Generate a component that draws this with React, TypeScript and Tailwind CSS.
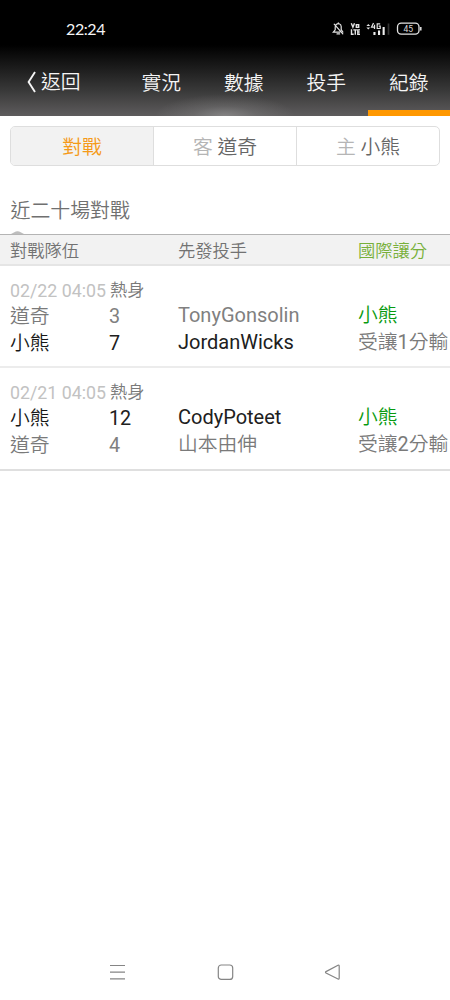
import React from "react";

type Side = { name: string; score: string; pitcher: string; won: boolean };
type Game = { date: string; kind: string; sides: Side[]; pick: string; runs: number };

const games: Game[] = [
  {
    date: "02/22 04:05",
    kind: "熱身",
    sides: [
      { name: "道奇", score: "3", pitcher: "TonyGonsolin", won: false },
      { name: "小熊", score: "7", pitcher: "JordanWicks", won: true },
    ],
    pick: "小熊",
    runs: 1,
  },
  {
    date: "02/21 04:05",
    kind: "熱身",
    sides: [
      { name: "小熊", score: "12", pitcher: "CodyPoteet", won: true },
      { name: "道奇", score: "4", pitcher: "山本由伸", won: false },
    ],
    pick: "小熊",
    runs: 2,
  },
];

const tabs = ["實況", "數據", "投手", "紀錄"];

function StatusIcons() {
  return (
    <svg width="92" height="20" viewBox="332 19 92 20" fill="none" stroke="#e4e4e4">
      <path d="M335.200 26.500v3.300l-1.900 2.300h6.500M335.900 24.900a2.900 2.900 0 0 1 5.300 1.600v3.200l1.700 2.300M337 33.900h2.600M334.200 24.200l8.600 9.700M338.300 22.800v1" strokeWidth="1.2" strokeLinecap="round" />
      <path d="M351.300 23.200l1.600 4 1.600-4M356.300 24.800h2.400v2.500h-2.400zM351.500 29.200v5h2.200M353.300 29.900h3.600M355.300 29.900v4.800M360 29.900h-2.200v4.400h2.200M357.800 32h1.900" strokeWidth="1.4" />
      <path d="M366.400 26l1.900-2 1.900 2zM366.400 27.600l1.900 2 1.900-2z" fill="#e4e4e4" stroke="none" />
      <path d="M373.500 23l-2 4.200h3.700M374.500 24.800v4.200M380.200 23.800h-3v4.700h3v-2.300h-1.500" strokeWidth="1.200" />
      <path d="M373.400 32h2.100v3h-2.100zM378 30.500h2.100V35H378zM382.600 27h2.100v8h-2.100z" fill="#eee" stroke="none" />
      <path d="M388.500 23.500v11.3" stroke="#333" strokeWidth="1.7" />
      <rect x="397.500" y="23.200" width="21.500" height="11" rx="3.700" strokeWidth="1.300" />
      <path d="M420.800 27v3.600" strokeWidth="1.500" />
      <text x="408.300" y="31.800" textAnchor="middle" fill="#d8d8d8" stroke="none" fontSize="8.500" fontWeight="400" fontFamily="Roboto, sans-serif">45</text>
    </svg>
  );
}

function Header() {
  return (
    <header className="h-[116px] bg-[radial-gradient(ellipse_70px_22px_at_50%_100%,#aaaaaa80_0%,#aaaaaa30_45%,transparent_100%),linear-gradient(to_bottom,#000_0,#000_45px,#1c1c1c_68px,#383838_90px,#5e5c5d_116px)] text-[#f5f5f5]">
      <div className="flex h-[48px] items-start justify-between pl-[66px] pr-[26px] pt-[19px]">
        <time className="font-[Lato,sans-serif] text-[16px] font-normal leading-5 tracking-[-0.4px]">22:24</time>
        <StatusIcons />
      </div>
      <nav className="flex h-[68px] text-[19.800px] leading-[68px]">
        <button className="flex w-[120px] items-center pl-[26px]">
          <svg width="11" height="22" viewBox="0 0 11 22" fill="none" stroke="#f5f5f5" strokeWidth="1.9">
            <path d="M9 1L2.6 11 9 21" />
          </svg>
          <span className="ml-[4px] pt-[2px]">返回</span>
        </button>
        {tabs.map((tab) => (
          <button
            key={tab}
            className={
              tab === "紀錄"
                ? "w-[82.500px] bg-[linear-gradient(to_top,#ff9800_6px,transparent_6px)] pt-[2px]"
                : "w-[82.500px] pt-[2px]"
            }
          >
            {tab}
          </button>
        ))}
      </nav>
    </header>
  );
}

function Segments() {
  return (
    <div className="mx-[10px] mt-[10px] flex h-10 divide-x divide-[#dedede] overflow-hidden rounded-[5px] border border-[#dedede] text-[19.800px] leading-[41px] text-[#666]">
      <button className="w-[143px] bg-[#f2f2f2] text-[#f59a18]">對戰</button>
      <button className="w-[143px]"><span className="text-[#b5b5b5]">客</span> 道奇</button>
      <button className="flex-1"><span className="text-[#b5b5b5]">主</span> 小熊</button>
    </div>
  );
}

function GameRow({ game, last }: { game: Game; last: boolean }) {
  return (
    <section
      className={
        last
          ? "h-[103px] border-b-2 border-[#dfdfdf] pl-[10px] pt-[12px]"
          : "h-[102px] border-b-2 border-[#ececec] pl-[10px] pt-[12px]"
      }
    >
      <div className="flex h-[25px] items-center text-[17.200px] leading-[25px] text-[#7a7a7a]">
        <span className="w-[100px] text-[17.800px] font-normal text-[#c2c2c2]">{game.date}</span>
        <span>{game.kind}</span>
      </div>
      <div className="grid grid-cols-[99px_69px_180px_1fr] whitespace-nowrap text-[19.800px] leading-[27px]">
        <div>
          {game.sides.map((s) => (
            <div key={s.name} className={s.won ? "text-[#181818]" : "text-[#7a7a7a]"}>{s.name}</div>
          ))}
        </div>
        <div className="font-normal">
          {game.sides.map((s) => (
            <div key={s.name} className={s.won ? "text-[#202020]" : "text-[#808080]"}>{s.score}</div>
          ))}
        </div>
        <div className="-mt-px text-[20px]">
          {game.sides.map((s) => (
            <div
              key={s.name}
              className={
                s.won
                  ? "font-normal text-[#202020]"
                  : /^[A-Z]/.test(s.pitcher)
                    ? "font-normal text-[#808080]"
                    : "text-[19.800px] text-[#7a7a7a]"
              }
            >
              {s.pitcher}
            </div>
          ))}
        </div>
        <div className="-mt-px text-[#7a7a7a]">
          <div className="text-[#089a10]">{game.pick}</div>
          <div>受讓<span className="font-normal">{game.runs}</span>分輸</div>
        </div>
      </div>
    </section>
  );
}

export default function App() {
  return (
    <div className="flex h-[1000px] w-[450px] flex-col overflow-hidden bg-white font-[Roboto,'Noto_Sans_CJK_TC',sans-serif] font-[350]" lang="zh-Hant">
      <Header />
      <Segments />
      <h2 className="mt-[29px] h-[36px] pl-[10.500px] text-[19.900px] font-[350] leading-[33px] text-[#707070]">近二十場對戰</h2>
      <svg className="ml-[10px]" width="15" height="3" viewBox="0 0 15 3">
        <path d="M1 3L5.800.6Q7.500-.2 9.200.6L14 3z" fill="#bdbdbd" />
      </svg>
      <div className="grid h-[32px] grid-cols-[168px_180px_1fr] border-b-2 border-t border-b-[#e5e5e5] border-t-[#b4b4b4] bg-[#f2f2f2] pl-[10px] text-[17.300px] leading-[33px] text-[#727272]">
        <span>對戰隊伍</span>
        <span>先發投手</span>
        <span className="text-[#78b03a]">國際讓分</span>
      </div>
      <main className="flex-1">
        {games.map((g, i) => (
          <GameRow key={g.date} game={g} last={i === games.length - 1} />
        ))}
      </main>
      <nav className="flex h-[56px] items-center justify-between pl-[109px] pr-[109px]">
        <svg width="17" height="18" viewBox="0 0 17 18" fill="none" stroke="#858585" strokeWidth="1.2">
          <path d="M1 2.500h15M1 9.200h15M1 15.900h15" />
        </svg>
        <svg width="17" height="18" viewBox="0 0 17 18" fill="none" stroke="#858585" strokeWidth="1.2">
          <rect x="1.300" y="2" width="14.400" height="14.400" rx="3" />
        </svg>
        <svg width="17" height="18" viewBox="0 0 17 18" fill="none" stroke="#858585" strokeWidth="1.2">
          <path d="M14 2.300L2 8.600q-1 .7 0 1.400l12 6q1.200.4 1.200-1V3.200q0-1.400-1.200-.9z" />
        </svg>
      </nav>
    </div>
  );
}
